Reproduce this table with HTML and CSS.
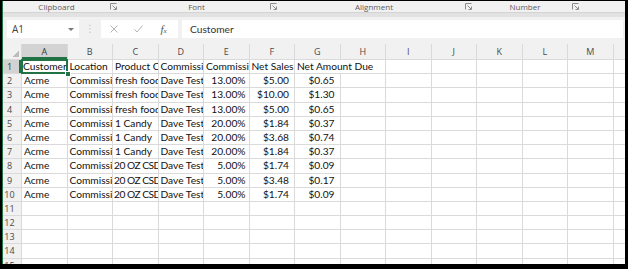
FILE: index.html
```html
<!doctype html>
<html>
    <head>
        <link rel="stylesheet" href="styles.css">
    </head>
    <body>
        <svg class="defs" width="0" height="0">
            <symbol id="launch" viewBox="0 0 7 7">
                <path d="M0.5 6.5V0.5H6.5" fill="none" stroke="#8c8c8c"/>
                <path d="M2.5 2.5L6 6M6.5 3.5V6.5H3.5" fill="none" stroke="#8c8c8c"/>
            </symbol>
        </svg>
        <div class="window">
            <div class="app">
                <div class="ribbon-groups">
                    <div class="group g-clip"><span class="group-label">Clipboard</span><svg class="launcher"><use href="#launch"/></svg></div>
                    <div class="group g-font"><span class="group-label">Font</span><svg class="launcher"><use href="#launch"/></svg></div>
                    <div class="group g-align"><span class="group-label">Alignment</span><svg class="launcher"><use href="#launch"/></svg></div>
                    <div class="group g-num"><span class="group-label">Number</span><svg class="launcher"><use href="#launch"/></svg></div>
                </div>
                <div class="ribbon-shade"></div>

                <div class="formula-bar">
                    <div class="name-box"><span>A1</span><span class="caret"></span></div>
                    <div class="grip">&#8942;</div>
                    <div class="cmd-box">
                        <span class="cmd">
                            <svg width="8" height="8" viewBox="0 0 8 8"><path d="M0.5 0.5L7.5 7.5M7.5 0.5L0.5 7.5" stroke="#b4b4b4"/></svg>
                        </span>
                        <span class="cmd">
                            <svg width="9" height="8" viewBox="0 0 9 8"><path d="M0.5 4.5L3 7L8.5 0.5" fill="none" stroke="#b4b4b4"/></svg>
                        </span>
                        <span class="cmd fx">f<small>x</small></span>
                    </div>
                    <div class="formula-input">Customer</div>
                </div>

                <div class="sheet">
                    <!-- column headers -->
                    <div class="corner"></div>
                    <div class="ch active">A</div><div class="ch">B</div><div class="ch">C</div><div class="ch">D</div><div class="ch">E</div><div class="ch">F</div><div class="ch">G</div><div class="ch">H</div><div class="ch">I</div><div class="ch">J</div><div class="ch">K</div><div class="ch">L</div><div class="ch">M</div><div class="ch"></div>

                    <div class="rh active">1</div>
                    <div class="c sel">Customer</div><div class="c">Location</div><div class="c">Product C</div><div class="c">Commissi</div><div class="c">Commissi</div><div class="c">Net Sales</div><div class="c wide">Net Amount Due</div><div class="c"></div><div class="c"></div><div class="c"></div><div class="c"></div><div class="c"></div><div class="c"></div>

                    <div class="rh">2</div>
                    <div class="c">Acme</div><div class="c">Commissi</div><div class="c">fresh food</div><div class="c">Dave Test</div><div class="c n">13.00%</div><div class="c m">$5.00</div><div class="c m">$0.65</div><div class="c"></div><div class="c"></div><div class="c"></div><div class="c"></div><div class="c"></div><div class="c"></div><div class="c"></div>

                    <div class="rh">3</div>
                    <div class="c">Acme</div><div class="c">Commissi</div><div class="c">fresh food</div><div class="c">Dave Test</div><div class="c n">13.00%</div><div class="c m">$10.00</div><div class="c m">$1.30</div><div class="c"></div><div class="c"></div><div class="c"></div><div class="c"></div><div class="c"></div><div class="c"></div><div class="c"></div>

                    <div class="rh">4</div>
                    <div class="c">Acme</div><div class="c">Commissi</div><div class="c">fresh food</div><div class="c">Dave Test</div><div class="c n">13.00%</div><div class="c m">$5.00</div><div class="c m">$0.65</div><div class="c"></div><div class="c"></div><div class="c"></div><div class="c"></div><div class="c"></div><div class="c"></div><div class="c"></div>

                    <div class="rh">5</div>
                    <div class="c">Acme</div><div class="c">Commissi</div><div class="c">1 Candy</div><div class="c">Dave Test</div><div class="c n">20.00%</div><div class="c m">$1.84</div><div class="c m">$0.37</div><div class="c"></div><div class="c"></div><div class="c"></div><div class="c"></div><div class="c"></div><div class="c"></div><div class="c"></div>

                    <div class="rh">6</div>
                    <div class="c">Acme</div><div class="c">Commissi</div><div class="c">1 Candy</div><div class="c">Dave Test</div><div class="c n">20.00%</div><div class="c m">$3.68</div><div class="c m">$0.74</div><div class="c"></div><div class="c"></div><div class="c"></div><div class="c"></div><div class="c"></div><div class="c"></div><div class="c"></div>

                    <div class="rh">7</div>
                    <div class="c">Acme</div><div class="c">Commissi</div><div class="c">1 Candy</div><div class="c">Dave Test</div><div class="c n">20.00%</div><div class="c m">$1.84</div><div class="c m">$0.37</div><div class="c"></div><div class="c"></div><div class="c"></div><div class="c"></div><div class="c"></div><div class="c"></div><div class="c"></div>

                    <div class="rh">8</div>
                    <div class="c">Acme</div><div class="c">Commissi</div><div class="c csd">20 OZ CSD</div><div class="c">Dave Test</div><div class="c n">5.00%</div><div class="c m">$1.74</div><div class="c m">$0.09</div><div class="c"></div><div class="c"></div><div class="c"></div><div class="c"></div><div class="c"></div><div class="c"></div><div class="c"></div>

                    <div class="rh">9</div>
                    <div class="c">Acme</div><div class="c">Commissi</div><div class="c csd">20 OZ CSD</div><div class="c">Dave Test</div><div class="c n">5.00%</div><div class="c m">$3.48</div><div class="c m">$0.17</div><div class="c"></div><div class="c"></div><div class="c"></div><div class="c"></div><div class="c"></div><div class="c"></div><div class="c"></div>

                    <div class="rh">10</div>
                    <div class="c">Acme</div><div class="c">Commissi</div><div class="c csd">20 OZ CSD</div><div class="c">Dave Test</div><div class="c n">5.00%</div><div class="c m">$1.74</div><div class="c m">$0.09</div><div class="c"></div><div class="c"></div><div class="c"></div><div class="c"></div><div class="c"></div><div class="c"></div><div class="c"></div>

                    <div class="rh">11</div>
                    <div class="c"></div><div class="c"></div><div class="c"></div><div class="c"></div><div class="c"></div><div class="c"></div><div class="c"></div><div class="c"></div><div class="c"></div><div class="c"></div><div class="c"></div><div class="c"></div><div class="c"></div><div class="c"></div>

                    <div class="rh">12</div>
                    <div class="c"></div><div class="c"></div><div class="c"></div><div class="c"></div><div class="c"></div><div class="c"></div><div class="c"></div><div class="c"></div><div class="c"></div><div class="c"></div><div class="c"></div><div class="c"></div><div class="c"></div><div class="c"></div>

                    <div class="rh">13</div>
                    <div class="c"></div><div class="c"></div><div class="c"></div><div class="c"></div><div class="c"></div><div class="c"></div><div class="c"></div><div class="c"></div><div class="c"></div><div class="c"></div><div class="c"></div><div class="c"></div><div class="c"></div><div class="c"></div>

                    <div class="rh">14</div>
                    <div class="c"></div><div class="c"></div><div class="c"></div><div class="c"></div><div class="c"></div><div class="c"></div><div class="c"></div><div class="c"></div><div class="c"></div><div class="c"></div><div class="c"></div><div class="c"></div><div class="c"></div><div class="c"></div>

                    <div class="rh">15</div>
                    <div class="c"></div><div class="c"></div><div class="c"></div><div class="c"></div><div class="c"></div><div class="c"></div><div class="c"></div><div class="c"></div><div class="c"></div><div class="c"></div><div class="c"></div><div class="c"></div><div class="c"></div><div class="c"></div>
                </div>
            </div>
        </div>
    </body>
</html>
```

FILE: styles.css
```css
html, body {
    margin: 0;
    background: #000;
}
body {
    font-family: Lato, "Liberation Sans", sans-serif;
}
.defs {
    display: block;
    width: 0;
    height: 0;
}
.window {
    width: 628px;
    height: 269px;
    box-sizing: border-box;
    border-style: solid;
    border-color: #000;
    border-width: 1px 3px 5px 2px;
    overflow: hidden;
}
.app {
    height: 100%;
    border-left: 1px solid #217346;
    background: #fff;
    display: flex;
    flex-direction: column;
}

/* ribbon group captions */
.ribbon-groups {
    display: flex;
    flex: none;
    height: 11px;
    background: #f1f1f1;
    border-bottom: 1px solid #d4d4d4;
    font: 8px/11px "Open Sans", sans-serif;
    color: #5c5c5c;
}
.group {
    display: flex;
    align-items: center;
}
.group-label {
    flex: 1;
    text-align: center;
}
.launcher {
    width: 7px;
    height: 7px;
    margin-right: 6px;
}
.g-clip { width: 120px; }
.g-font { width: 160px; }
.g-align { width: 195px; }
.g-num { width: 107px; }
.ribbon-shade {
    flex: none;
    height: 4px;
    background: #e2e2e2;
}

/* name box + formula bar */
.formula-bar {
    flex: none;
    height: 27px;
    box-sizing: border-box;
    padding: 3px 2px 0 4px;
    background: #f1f1f1;
    display: flex;
    align-items: flex-start;
}
.name-box {
    width: 72px;
    height: 18px;
    box-sizing: border-box;
    padding: 0 5px;
    background: #fff;
    display: flex;
    align-items: center;
    justify-content: space-between;
    font: 10px "Open Sans", sans-serif;
    color: #444;
}
.caret {
    border-left: 3px solid transparent;
    border-right: 3px solid transparent;
    border-top: 3px solid #777;
}
.grip {
    width: 22px;
    height: 18px;
    text-align: center;
    font: 10px/18px "DejaVu Sans", sans-serif;
    color: #c4c4c4;
}
.cmd-box {
    width: 77px;
    height: 18px;
    background: #fff;
    display: flex;
}
.cmd {
    width: 25px;
    display: flex;
    align-items: center;
    justify-content: center;
}
.fx {
    font: italic 11px "Liberation Serif", serif;
    color: #555;
}
.fx small {
    font-size: 7px;
    margin-top: 3px;
}
.formula-input {
    flex: 1;
    height: 18px;
    margin-left: 4px;
    padding-left: 8px;
    background: #fff;
    font-size: 10.2px;
    line-height: 18px;
    color: #333;
}

/* worksheet grid */
.sheet {
    flex: 1;
    overflow: hidden;
    display: grid;
    grid-template-columns: 18px repeat(13, 44.5px) 1fr;
    grid-template-rows: 15px;
    grid-auto-rows: 13.2px;
    gap: 1px;
    background: #dadada;
}
.corner {
    background: #f1f1f1 linear-gradient(135deg, transparent 50%, #bcbcbc 50%) no-repeat right 2px bottom 2px / 7px 7px;
}
.ch {
    background: #f1f1f1;
    text-align: center;
    font: 9px/16px "Open Sans", sans-serif;
    color: #4a4a4a;
}
.rh {
    background: #f1f1f1;
    padding-right: 5px;
    text-align: center;
    font: 9px/13.2px "Open Sans", sans-serif;
    color: #4a4a4a;
}
.ch.active {
    background: #d3d3d3;
    box-shadow: inset 0 -2px #217346;
    color: #2b3f33;
}
.rh.active {
    background: #d3d3d3;
    box-shadow: inset -2px 0 #217346;
    color: #2b3f33;
}
.c {
    background: #fff;
    padding: 0 1px 0 2px;
    overflow: hidden;
    white-space: nowrap;
    font-size: 10.2px;
    line-height: 13.2px;
    color: #111;
}
.csd {
    padding-left: 1px;
    letter-spacing: -0.5px;
}
.wide {
    grid-column: span 2;
}
.n {
    text-align: right;
    padding-right: 3px;
}
.m {
    text-align: right;
    padding-right: 5px;
}
.sel {
    position: relative;
    z-index: 1;
    padding-left: 1px;
    outline: 2px solid #217346;
    outline-offset: -1px;
    overflow: visible;
}
.sel::after {
    content: "";
    position: absolute;
    right: -4px;
    bottom: -4px;
    width: 4px;
    height: 4px;
    background: #217346;
    border: 1px solid #fff;
}
```
